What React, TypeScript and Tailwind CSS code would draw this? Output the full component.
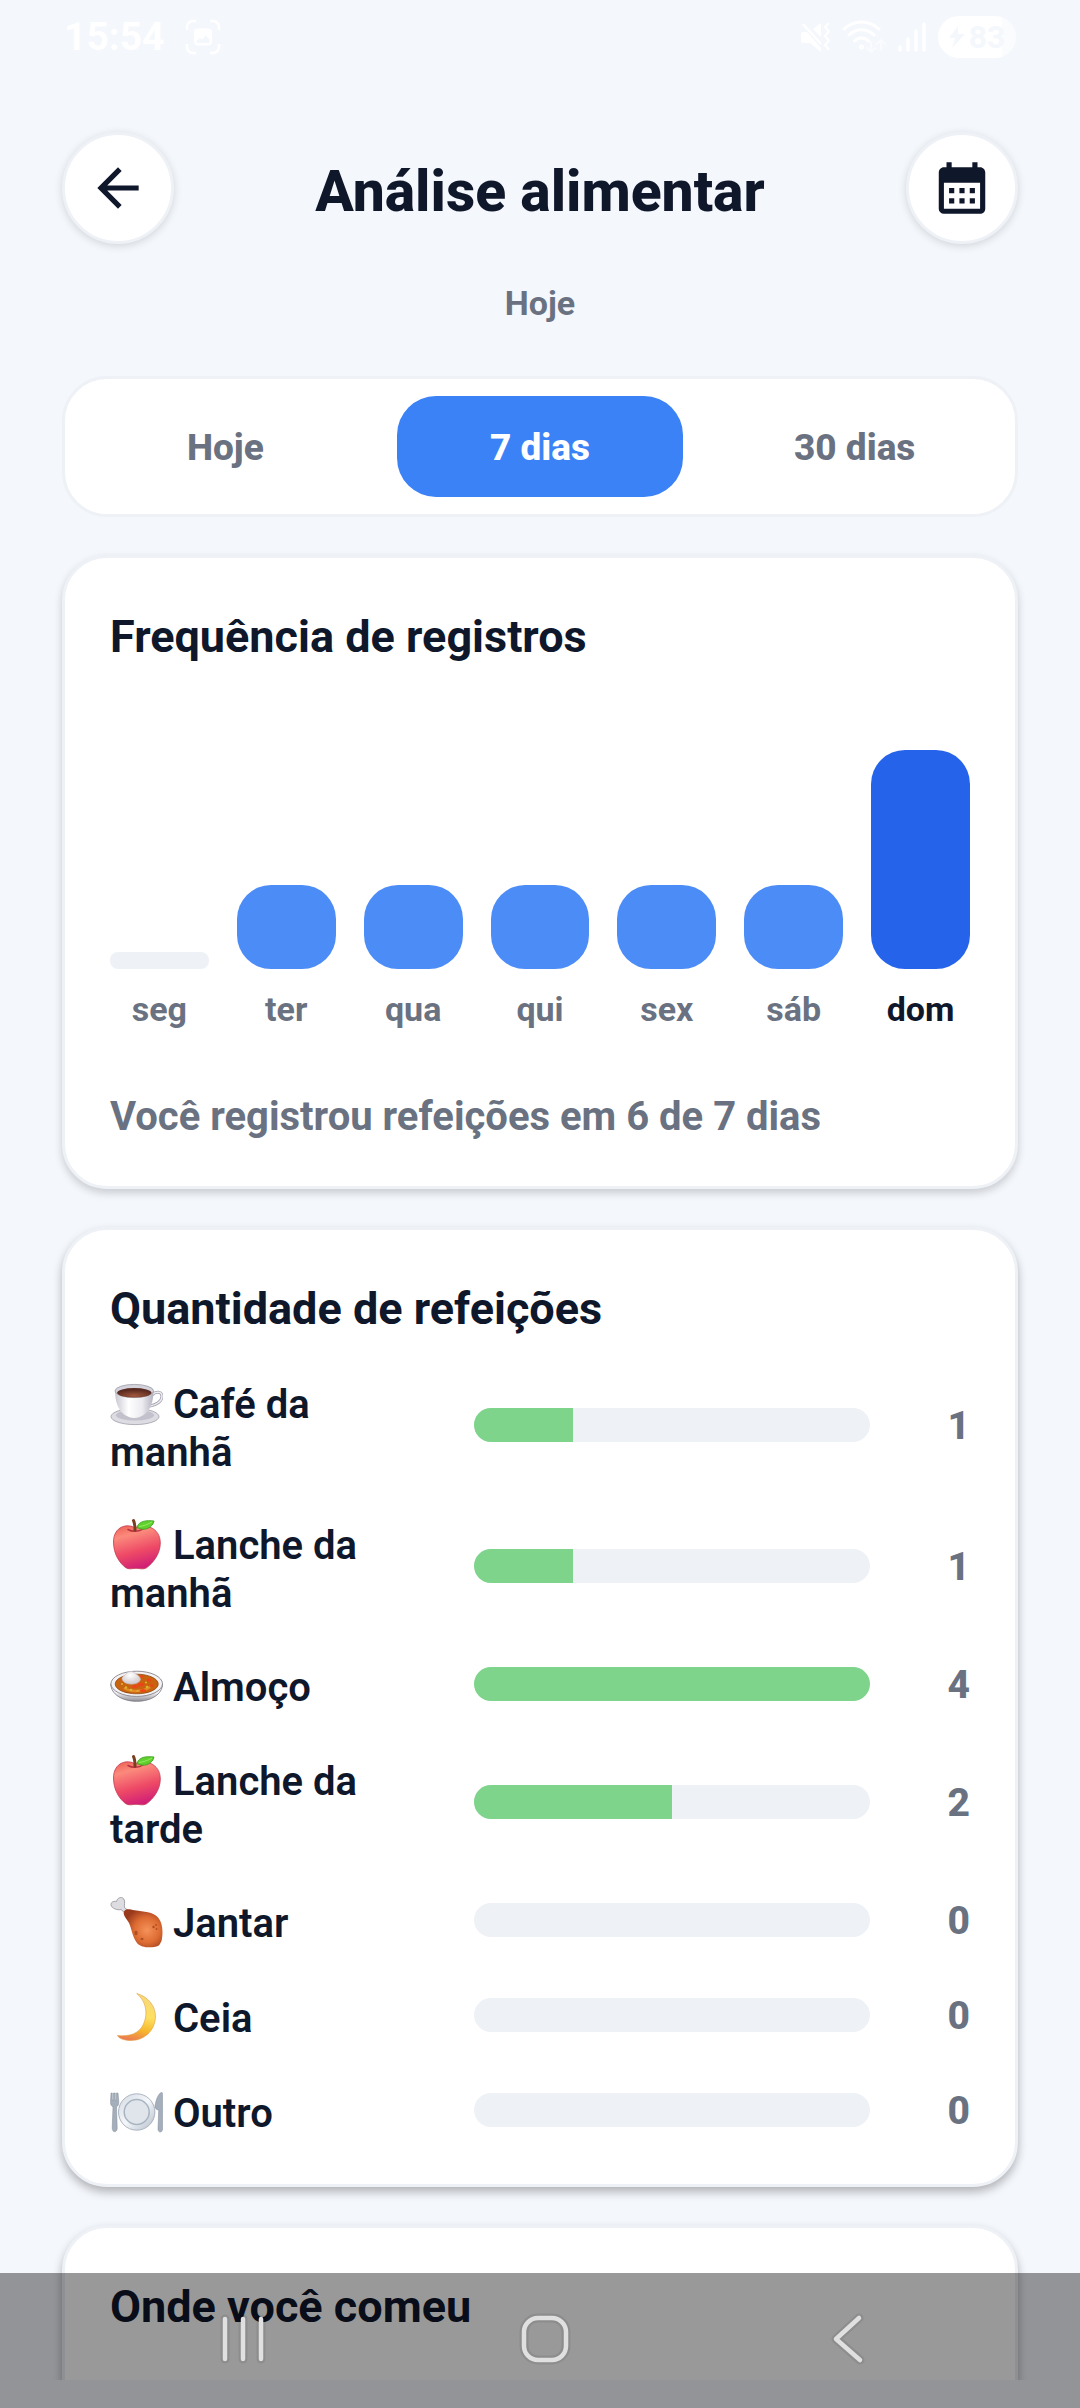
import { useState } from "react"
import type { ReactNode } from "react"
import { MdArrowBack, MdCalendarMonth } from "react-icons/md"

const periods = ["Hoje", "7 dias", "30 dias"]

const days = [
  { label: "seg", height: 17, color: "bg-[#eef1f6]", radius: "rounded-[8px]" },
  { label: "ter", height: 84, color: "bg-[#4c8cf6]", radius: "rounded-[34px]" },
  { label: "qua", height: 84, color: "bg-[#4c8cf6]", radius: "rounded-[34px]" },
  { label: "qui", height: 84, color: "bg-[#4c8cf6]", radius: "rounded-[34px]" },
  { label: "sex", height: 84, color: "bg-[#4c8cf6]", radius: "rounded-[34px]" },
  { label: "sáb", height: 84, color: "bg-[#4c8cf6]", radius: "rounded-[34px]" },
  { label: "dom", height: 219, color: "bg-[#2563eb]", radius: "rounded-[34px]", today: true },
]

const meals = [
  { icon: <CoffeeIcon />, label: "Café da manhã", count: 1 },
  { icon: <AppleIcon id="apple-morning" />, label: "Lanche da manhã", count: 1 },
  { icon: <CurryIcon />, label: "Almoço", count: 4 },
  { icon: <AppleIcon id="apple-afternoon" />, label: "Lanche da tarde", count: 2 },
  { icon: <DrumstickIcon />, label: "Jantar", count: 0 },
  { icon: <MoonIcon />, label: "Ceia", count: 0 },
  { icon: <PlateIcon />, label: "Outro", count: 0 },
]

const maxCount = Math.max(...meals.map((meal) => meal.count))

function FoodIcon({ children }: { children: ReactNode }) {
  return (
    <svg viewBox="0 0 53 53" className="inline-block size-[53px] -my-2 align-[-4px]" aria-hidden="true">
      {children}
    </svg>
  )
}

function CoffeeIcon() {
  return (
    <FoodIcon>
      <defs>
        <linearGradient id="cup" x1="0" x2="1">
          <stop offset="0" stopColor="#c9c8d2" />
          <stop offset="0.35" stopColor="#ffffff" />
          <stop offset="0.7" stopColor="#ececf1" />
          <stop offset="1" stopColor="#b4b2c0" />
        </linearGradient>
        <radialGradient id="coffee" cx="0.5" cy="0.8" r="0.6">
          <stop offset="0" stopColor="#a0563d" />
          <stop offset="1" stopColor="#5a2a20" />
        </radialGradient>
      </defs>
      <ellipse cx="25" cy="39.6" rx="24" ry="8" fill="#dddce3" stroke="#a19fab" strokeWidth="0.8" />
      <ellipse cx="25" cy="38.2" rx="19" ry="5.4" fill="#c3c1cc" />
      <path d="M42 18c4-4 10-3.6 10 1.5 0 5-6 8.5-12 9.5" fill="none" stroke="#a3a1ae" strokeWidth="3" />
      <path d="M42 18c4-4 10-3.6 10 1.5 0 5-6 8.5-12 9.5" fill="none" stroke="#eeeef2" strokeWidth="1.5" />
      <path d="M5 14c0 11 4 26 19.3 27C39.5 40 43.5 25 43.5 14z" fill="url(#cup)" />
      <ellipse cx="24.3" cy="14" rx="19.3" ry="6.6" fill="#d4d3dc" stroke="#9b99a7" strokeWidth="0.8" />
      <ellipse cx="24.3" cy="15.8" rx="17.2" ry="4.8" fill="url(#coffee)" />
    </FoodIcon>
  )
}

function AppleIcon({ id }: { id: string }) {
  return (
    <FoodIcon>
      <defs>
        <linearGradient id={id} x1="0.3" y1="0" x2="0.6" y2="1">
          <stop offset="0" stopColor="#f0685c" />
          <stop offset="0.2" stopColor="#fb8a7c" />
          <stop offset="0.6" stopColor="#ee4a66" />
          <stop offset="1" stopColor="#cf1c78" />
        </linearGradient>
      </defs>
      <path
        d="M25 10C18 5 3.5 8 3.5 24c0 12 6 21 12 25.500 3.500 2.200 6.500 1 10.500.8 4 .2 7 1.400 10.500-.5C43 45 50.300 36 50.300 25 50.300 9 34 5 25 10z"
        fill={`url(#${id})`}
        stroke="#c3384f"
        strokeWidth="0.8"
      />
      <path d="M18 11.500c4 2.500 11 2.500 15-.5" fill="none" stroke="#b8323f" strokeWidth="1.500" strokeLinecap="round" />
      <path d="M23.500 2.500c1.500 3 1.500 6 1.500 9.500" fill="none" stroke="#7b3f1d" strokeWidth="3" strokeLinecap="round" />
      <path d="M27 9.500C28.500 3 36 2 44 3c-1 6-9 11-17 6.500z" fill="#5fd02e" stroke="#3b9e1e" strokeWidth="0.8" />
      <path d="M29 8.500c4-.5 9-2 13-4.500" fill="none" stroke="#a5f06b" strokeWidth="0.8" />
    </FoodIcon>
  )
}

function CurryIcon() {
  return (
    <FoodIcon>
      <defs>
        <linearGradient id="dish" x1="0" y1="0" x2="0" y2="1">
          <stop offset="0.5" stopColor="#f4f3f5" />
          <stop offset="1" stopColor="#8f8c95" />
        </linearGradient>
        <radialGradient id="rice" cx="0.45" cy="0.3" r="0.7">
          <stop offset="0" stopColor="#ffffff" />
          <stop offset="1" stopColor="#cfc6ca" />
        </radialGradient>
      </defs>
      <path d="M.8 24C.8 34 12 41.300 26.700 41.300S52.500 34 52.500 24z" fill="url(#dish)" stroke="#77737c" strokeWidth="0.8" />
      <ellipse cx="26.700" cy="23.800" rx="25.800" ry="12.600" fill="#f3f2f4" stroke="#77737c" strokeWidth="0.8" />
      <ellipse cx="26.700" cy="24" rx="21.500" ry="9.800" fill="#c8640f" stroke="#93480f" strokeWidth="0.8" />
      <path d="M14 28c6 4 19 4 26-1" fill="none" stroke="#e38b26" strokeWidth="2.500" />
      <g fill="#ee4518">
        <ellipse cx="31" cy="24.500" rx="3.500" ry="1.800" />
        <ellipse cx="39" cy="20" rx="2.500" ry="1.500" />
        <ellipse cx="25" cy="26.500" rx="3" ry="1.600" />
        <ellipse cx="33" cy="30.500" rx="3" ry="1.500" />
        <ellipse cx="42" cy="25.500" rx="2" ry="1.300" />
        <ellipse cx="32" cy="16.500" rx="2" ry="1.200" />
      </g>
      <g fill="#d9b52e">
        <circle cx="16" cy="27.500" r="1.200" />
        <circle cx="21" cy="30" r="1.300" />
        <circle cx="37" cy="27" r="1.300" />
        <circle cx="36" cy="22.500" r="1.100" />
        <circle cx="27.500" cy="31" r="1.100" />
        <circle cx="12" cy="24" r="1" />
      </g>
      <path
        d="M12 19c0-3 4-4 5-6 2-2 6-2 8 0 1.500 1.500 5 3 5.500 6.500C29 25.500 14 26 12 19z"
        fill="url(#rice)"
        stroke="#c9bcc0"
        strokeWidth="0.6"
      />
    </FoodIcon>
  )
}

function DrumstickIcon() {
  return (
    <FoodIcon>
      <defs>
        <radialGradient id="meat" cx="0.6" cy="0.55" r="0.6">
          <stop offset="0" stopColor="#f5925a" />
          <stop offset="0.55" stopColor="#dd6c33" />
          <stop offset="1" stopColor="#9a3a1c" />
        </radialGradient>
      </defs>
      <path
        d="M15 17 11 13.500C8 14.500 1 12.500 1 8.500 1 5.500 4.500 5 6.500 5.500 7 2 11.500 0 13.800 3c1.700 2.500.2 6 .7 8.500l3.500 3z"
        fill="#dddde1"
        stroke="#8f8f97"
        strokeWidth="0.8"
      />
      <path
        d="M14 15.500c2-3.500 6-2 10.500-1.200C34 16 43 15.500 48.500 22 54 29 52.500 41 51.500 45c-1 1.500-1.500 4-3.500 5-4 1.500-16 3-21-3-5-7-5-13-8-20-2-4-6.500-8-5-11.500z"
        fill="url(#meat)"
      />
      <g fill="#b04d22">
        <ellipse cx="26" cy="37" rx="1.600" ry="2.200" />
        <ellipse cx="32" cy="43" rx="1.500" ry="1.200" />
        <circle cx="43.500" cy="31" r="1.200" />
        <circle cx="46.500" cy="33" r="0.900" />
        <circle cx="46" cy="29" r="0.900" />
      </g>
    </FoodIcon>
  )
}

function MoonIcon() {
  return (
    <FoodIcon>
      <defs>
        <linearGradient id="moon" x1="0.6" y1="0" x2="0.4" y2="1">
          <stop offset="0" stopColor="#f7d77c" />
          <stop offset="0.45" stopColor="#fde060" />
          <stop offset="0.75" stopColor="#f6b62c" />
          <stop offset="1" stopColor="#ec7d52" />
        </linearGradient>
      </defs>
      <path
        d="M26.700 2.500C38 5.500 45.700 15 45.500 26 45 40 34 49.500 21 49.500c-5.500 0-12-1.500-13.500-5C20 46 29 42 33 34c5-10 4-23-6.300-31.500z"
        fill="url(#moon)"
        stroke="#e0a040"
        strokeWidth="0.6"
      />
    </FoodIcon>
  )
}

function PlateIcon() {
  return (
    <FoodIcon>
      <defs>
        <linearGradient id="plate" x1="0" y1="0" x2="1" y2="1">
          <stop offset="0" stopColor="#d3dae3" />
          <stop offset="0.5" stopColor="#f4f7fa" />
          <stop offset="1" stopColor="#b3bdc9" />
        </linearGradient>
      </defs>
      <circle cx="26.700" cy="26" r="18.200" fill="url(#plate)" stroke="#9aa5b3" strokeWidth="0.8" />
      <circle cx="26.700" cy="26" r="12.500" fill="#dfe5eb" stroke="#a9b4c1" strokeWidth="1.500" />
      <path
        d="M1 7h1.300v7h1.200V7h1.800v7h1.200V7H8l.8 9c0 3-1 4-2.300 5l.7 21c0 5-5 5-5 0L3 21C1.500 20 .5 19 .5 16z"
        fill="#a5afbc"
        stroke="#7f8a99"
        strokeWidth="0.5"
      />
      <path
        d="M51.500 6.500c1 0 1 .5 1 2V43c0 4-4.500 4-4.500 0l.7-19c-2.500 0-4-2-3.700-4 1-6 3-12.500 6.500-13.500z"
        fill="#a5afbc"
        stroke="#7f8a99"
        strokeWidth="0.5"
      />
    </FoodIcon>
  )
}

function StatusBar() {
  return (
    <div className="flex h-[74px] shrink-0 items-center justify-between px-[64px] text-white">
      <div className="flex items-center gap-5">
        <span className="text-[39px] leading-[48px] font-bold">15:54</span>
        <svg viewBox="0 0 36 36" className="size-[36px]" fill="none" stroke="currentColor" strokeWidth="2.500" aria-hidden="true">
          <path d="M2 11V8a6 6 0 0 1 6-6h3M25 2h3a6 6 0 0 1 6 6v3M34 25v3a6 6 0 0 1-6 6h-3M11 34H8a6 6 0 0 1-6-6v-3" />
          <path
            fill="currentColor"
            stroke="none"
            fillRule="evenodd"
            d="M13 9.500h10a4 4 0 0 1 4 4v9a4 4 0 0 1-4 4H13a4 4 0 0 1-4-4v-9a4 4 0 0 1 4-4zM11.500 24h13v-3.500l-3.500-4-4 4-2-1.500-3.500 3z"
          />
        </svg>
      </div>
      <div className="flex items-center gap-[12px]">
        <svg viewBox="0 0 30 30" className="size-[30px]" fill="currentColor" aria-hidden="true">
          <path d="M1 12a2 2 0 0 1 2-2h4l14 16v4L10 21H3a2 2 0 0 1-2-2zM21 1v14l-8-8z" />
          <path d="M3 2l18 20M29 1l-4 4 4 4.500-4 4.500 4 4.500-4 4.500 4 5" fill="none" stroke="currentColor" strokeWidth="2.200" />
        </svg>
        <svg viewBox="0 0 44 34" className="h-[34px] w-[44px]" fill="none" stroke="currentColor" strokeWidth="3" strokeLinecap="round" aria-hidden="true">
          <path d="M2 9c10-9.500 25-9.500 35 0M7 15c7-7 18-7 25 0M12.500 21c4-4 10-4 14 0" />
          <circle cx="19.500" cy="27" r="1" />
          <path d="M29 22v10m-4-4 4 4 4-4M39 30V20m-4 4 4-4 4 4" strokeWidth="2" opacity="0.500" />
        </svg>
        <svg viewBox="0 0 28 30" className="h-[30px] w-[28px]" stroke="currentColor" strokeWidth="3.500" strokeLinecap="round" aria-hidden="true">
          <path d="M2 25v3M10 17v11M18 9v19M26 2v26" />
        </svg>
        <div className="flex h-[42px] w-[78px] items-center justify-center overflow-hidden rounded-full bg-linear-to-r from-white from-82% to-white/60 to-82% text-[#f4f7fc]">
          <svg viewBox="0 0 16 22" className="h-[22px] w-[16px]" fill="currentColor" aria-hidden="true">
            <path d="M9 0 0 12h6l-3 10L16 8H9z" />
          </svg>
          <span className="ml-1 text-[32px] leading-[42px] font-bold">83</span>
        </div>
      </div>
    </div>
  )
}

function IconButton({ label, children }: { label: string; children: ReactNode }) {
  return (
    <button
      aria-label={label}
      className="flex size-[112px] shrink-0 items-center justify-center rounded-full border-3 border-[#eef1f6] bg-white text-[62px] shadow-[0_2px_8px_rgba(0,0,0,0.14)]"
    >
      {children}
    </button>
  )
}

function Card({ title, className = "", children }: { title: string; className?: string; children?: ReactNode }) {
  return (
    <section
      className={`mt-[38px] shrink-0 rounded-[45px] border-3 border-[#eef1f6] bg-white px-[45px] pt-[52px] pb-[45px] ${className}`}
    >
      <h2 className="text-[45px] leading-[54px] font-bold">{title}</h2>
      {children}
    </section>
  )
}

function NavIcon({ d }: { d: string }) {
  return (
    <svg viewBox="0 0 56 56" className="size-[56px]" fill="none" strokeLinecap="round" strokeLinejoin="round" aria-hidden="true">
      <path d={d} stroke="#000000" strokeOpacity="0.080" strokeWidth="9" />
      <path d={d} stroke="#e0e0e0" strokeWidth="4.500" />
    </svg>
  )
}

function NavigationBar() {
  return (
    <nav className="absolute inset-x-0 bottom-0 grid h-[135px] grid-cols-3 items-center bg-black/40 pr-[82px] pb-1 pl-[92px]">
      <button aria-label="Recentes" className="flex justify-center">
        <NavIcon d="M10 8v40M28 8v40M46 8v40" />
      </button>
      <button aria-label="Início" className="flex justify-center">
        <NavIcon d="M21 7h14a14 14 0 0 1 14 14v14a14 14 0 0 1-14 14H21A14 14 0 0 1 7 35V21A14 14 0 0 1 21 7z" />
      </button>
      <button aria-label="Voltar" className="flex justify-center">
        <NavIcon d="M40 7 17 28l24 21" />
      </button>
    </nav>
  )
}

export default function App() {
  const [period, setPeriod] = useState("7 dias")

  return (
    <div className="relative flex h-screen flex-col overflow-hidden bg-[#f4f7fc] pb-[28px] font-[Roboto,sans-serif] text-slate-900">
      <StatusBar />

      <main className="flex min-h-0 flex-1 flex-col overflow-hidden px-[62px] pt-[58px]">
        <header className="flex shrink-0 items-center justify-between">
          <IconButton label="Voltar">
            <MdArrowBack />
          </IconButton>
          <h1 className="pt-2 text-[57px] leading-[64px] font-extrabold">Análise alimentar</h1>
          <IconButton label="Escolher data">
            <MdCalendarMonth />
          </IconButton>
        </header>
        <p className="mt-[39px] text-center text-[34px] leading-[40px] font-bold text-gray-500">Hoje</p>

        {/* Period */}
        <div className="mt-[53px] grid shrink-0 grid-cols-3 gap-[28px] rounded-[45px] border-3 border-[#eef1f6] bg-white p-[17px]">
          {periods.map((item) => (
            <button
              key={item}
              aria-pressed={item === period}
              onClick={() => setPeriod(item)}
              className={`h-[101px] rounded-[39px] pt-[3px] text-[37px] leading-[44px] font-extrabold ${
                item === period ? "bg-[#3b82f6] text-white" : "text-gray-500"
              }`}
            >
              {item}
            </button>
          ))}
        </div>

        <Card title="Frequência de registros" className="shadow-[0_4px_8px_rgba(0,0,0,0.18)]">
          <div className="mt-6 grid grid-cols-7 gap-[28px]">
            {days.map((day) => (
              <div key={day.label}>
                <div className="flex h-[281px] items-end">
                  <div className={`w-full ${day.color} ${day.radius}`} style={{ height: day.height }} />
                </div>
                <p
                  className={`mt-5 text-center text-[34px] leading-[40px] font-bold ${
                    day.today ? "text-slate-900" : "text-gray-500"
                  }`}
                >
                  {day.label}
                </p>
              </div>
            ))}
          </div>
          <p className="mt-[64px] text-[40px] leading-[48px] font-bold text-gray-500">
            Você registrou refeições em 6 de 7 dias
          </p>
        </Card>

        <Card title="Quantidade de refeições" className="shadow-[0_5px_10px_rgba(0,0,0,0.28)]">
          <ul className="mt-[37px] flex flex-col gap-[37px]">
            {meals.map((meal, index) => (
              <li key={index} className="flex min-h-[58px] items-center">
                <p className="w-[364px] shrink-0 pt-2 pr-[64px] text-[40px] leading-[48px] font-semibold">
                  {meal.icon} {meal.label}
                </p>
                <div className="h-[34px] flex-1 overflow-hidden rounded-full bg-[#eef1f6]">
                  <div className="h-full bg-[#7dd48a]" style={{ width: `${(meal.count / maxCount) * 100}%` }} />
                </div>
                <span className="w-[100px] pt-[2px] text-right text-[39px] leading-[48px] font-extrabold text-gray-500">
                  {meal.count}
                </span>
              </li>
            ))}
          </ul>
        </Card>

        <Card title="Onde você comeu" className="min-h-[400px] shadow-[0_5px_10px_rgba(0,0,0,0.28)]" />
      </main>

      <NavigationBar />
    </div>
  )
}
